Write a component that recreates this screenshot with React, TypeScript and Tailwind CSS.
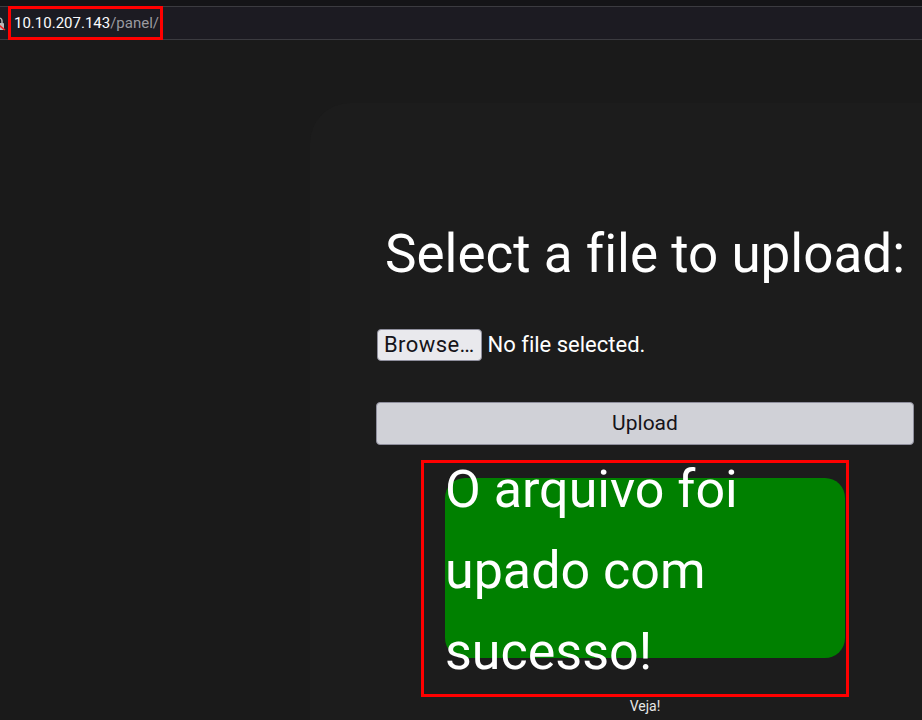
import React from "react";

const App = () => {
  return (
    <div className="h-[720px] w-[922px] overflow-hidden bg-[#1a1a1a] font-['Roboto',sans-serif] text-white [font-variant-ligatures:none]">
      {/* browser bar */}
      <div className="h-[6px] bg-[#141417]" />
      <div className="flex h-[34px] items-center border-y border-[#3b3b40] bg-[#1c1b22]">
        <svg width="6" height="14" viewBox="0 0 6 14" className="mt-[2px]">
          <path d="M-4 6 V4 a3 3 0 0 1 6 0 V6" fill="none" stroke="#bbb" strokeWidth="1.4" />
          <rect x="-6" y="6" width="10" height="7" rx="1" fill="#bbb" />
          <path d="M-6 4 L5 13" stroke="#e22" strokeWidth="1.6" />
        </svg>
        <div className="ml-[2px] flex h-[34px] items-center border-[3px] border-[#ff0000] pl-[3px] pr-px text-[15px]">
          <span className="text-[#fbfbfe]">10.10.207.143</span>
          <span className="text-[#9a9aa0]">/panel/</span>
        </div>
      </div>

      {/* card */}
      <div className="ml-[310px] mt-[63px] h-[617px] rounded-tl-[40px] bg-[#1c1c1c] pl-[66px] pt-[121px]">
        <div className="flex w-[538px] flex-col">
          <h1 className="text-center text-[53px] leading-[61px] text-white">Select a file to upload:</h1>

          <div className="mt-[43px] flex items-center gap-[6px] text-[22px]">
            <button className="ml-px h-[32px] rounded-[4px] border border-[#8f8f9d] bg-[#e9e9ed] px-[6px] text-[22px] leading-none tracking-[0.4px] text-[#15141a]">
              Browse…
            </button>
            <span className="text-white">No file selected.</span>
          </div>

          <button className="mt-[41px] h-[43px] w-[538px] rounded-[4px] border border-[#8f8f9d] bg-[#d0d1d7] text-[21px] text-[#15141a]">
            Upload
          </button>

          <div className="ml-[45px] mt-[15px] h-[237px] w-[428px] border-[3px] border-[#ff0000] pl-[21px] pt-[15px]">
            <div className="flow-root h-[180px] w-[400px] rounded-[20px] bg-[#008000]">
              <p className="-mt-[29px] text-[52px] leading-[81px] text-white">O arquivo foi upado com sucesso!</p>
            </div>
          </div>

          <p className="-mt-[1px] text-center text-[14px] leading-[20px] text-[#e6e6e6]">Veja!</p>
        </div>
      </div>
    </div>
  );
};

export default App;
